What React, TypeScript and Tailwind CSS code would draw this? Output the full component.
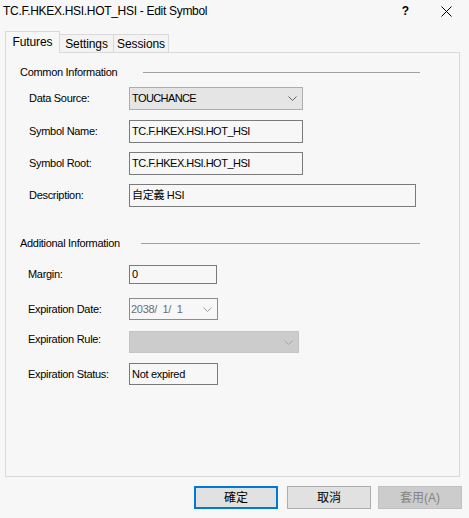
import React from "react";

function Chevron({ color = "#606060" }: { color?: string }) {
  return (
    <svg width="9" height="5" viewBox="0 0 9 5" className="block">
      <polyline points="0.5,0.5 4.5,4.5 8.5,0.5" fill="none" stroke={color} strokeWidth="1" />
    </svg>
  );
}

function Label({ children, w, className = "" }: { children: React.ReactNode; w: string; className?: string }) {
  return <span className={`${w} shrink-0 ${className}`}>{children}</span>;
}

export default function App() {
  return (
    <div className="w-[469px] h-[518px] bg-[#f7f7f7] flex flex-col font-['Liberation_Sans','Noto_Sans_CJK_TC',sans-serif] text-black overflow-hidden">
      {/* Title bar */}
      <div className="h-[21px] flex items-center pl-[3px] pr-[17px] pt-[1px]">
        <span className="text-[12px] tracking-[-0.3px]">TC.F.HKEX.HSI.HOT_HSI - Edit Symbol</span>
        <div className="ml-auto flex items-center">
          <span className="text-[12px] font-bold leading-none">?</span>
          <svg width="11" height="11" viewBox="0 0 11 11" className="ml-[32px] block">
            <line x1="0.5" y1="0.5" x2="10.5" y2="10.5" stroke="#000" strokeWidth="1" />
            <line x1="10.5" y1="0.5" x2="0.5" y2="10.5" stroke="#000" strokeWidth="1" />
          </svg>
        </div>
      </div>

      {/* Tabs */}
      <div className="mt-[10px] flex items-end pl-[5px] text-[12px] tracking-[-0.1px]">
        <div className="relative z-10 h-[22px] -mb-px w-[55px] border border-b-0 border-[#d9d9d9] bg-[#f7f7f7] flex items-center justify-center pb-[2px]">
          Futures
        </div>
        <div className="h-[18px] w-[54px] border-t border-r border-[#d9d9d9] bg-[#f3f3f3] flex items-center justify-center">
          Settings
        </div>
        <div className="h-[18px] w-[55px] border-t border-r border-[#d9d9d9] bg-[#f3f3f3] flex items-center justify-center">
          Sessions
        </div>
      </div>

      {/* Panel */}
      <div className="ml-[5px] w-[455px] h-[425px] border border-[#d9d9d9] bg-[#f7f7f7] flex flex-col text-[11px] tracking-[-0.3px]">
        <div className="mt-[11px] h-[16px] flex items-center pl-[14px]">
          <span className="w-[123px] shrink-0">Common Information</span>
          <div className="w-[277px] h-px bg-[#a0a0a0]" />
        </div>

        <div className="mt-[7px] h-[23px] flex items-center pl-[23px]">
          <Label w="w-[100px]">Data Source:</Label>
          <div className="w-[174px] h-[23px] border border-[#adadad] bg-[#e5e5e5] flex items-center pl-[2px] pr-[5px] tracking-[-0.6px]">
            <span>TOUCHANCE</span>
            <span className="ml-auto"><Chevron /></span>
          </div>
        </div>

        <div className="mt-[10px] h-[23px] flex items-center pl-[23px]">
          <Label w="w-[100px]">Symbol Name:</Label>
          <div className="w-[174px] h-[23px] border border-[#7a7a7a] flex items-center pl-[2px] tracking-[-0.5px]">
            TC.F.HKEX.HSI.HOT_HSI
          </div>
        </div>

        <div className="mt-[9px] h-[23px] flex items-center pl-[23px]">
          <Label w="w-[100px]">Symbol Root:</Label>
          <div className="w-[174px] h-[23px] border border-[#7a7a7a] flex items-center pl-[2px] tracking-[-0.5px]">
            TC.F.HKEX.HSI.HOT_HSI
          </div>
        </div>

        <div className="mt-[9px] h-[23px] flex items-center pl-[23px]">
          <Label w="w-[100px]">Description:</Label>
          <div className="w-[287px] h-[23px] border border-[#7a7a7a] flex items-center pl-[2px] tracking-[-0.3px]">
            自定義 HSI
          </div>
        </div>

        <div className="mt-[28px] h-[16px] flex items-center pl-[14px]">
          <span className="w-[121px] shrink-0">Additional Information</span>
          <div className="w-[279px] h-px bg-[#a0a0a0]" />
        </div>

        <div className="mt-[14px] h-[19px] flex items-center pl-[22px]">
          <Label w="w-[101px]">Margin:</Label>
          <div className="w-[88px] h-[19px] border border-[#7a7a7a] flex items-center pl-[2px]">0</div>
        </div>

        <div className="mt-[14px] h-[22px] flex items-center pl-[22px]">
          <Label w="w-[101px]">Expiration Date:</Label>
          <div className="w-[89px] h-[22px] border border-[#8c8c8c] flex items-center pl-[1px] pr-[5px] text-[#6d6d6d]">
            <span className="whitespace-pre">2038/  1/  1</span>
            <span className="ml-auto"><Chevron color="#a0a0a0" /></span>
          </div>
        </div>

        <div className="mt-[11px] h-[22px] flex items-center pl-[22px]">
          <Label w="w-[101px]" className="pb-[6px]">Expiration Rule:</Label>
          <div className="w-[170px] h-[22px] border border-[#c4c4c4] bg-[#cccccc] flex items-center justify-end pr-[5px]">
            <Chevron color="#a6a6a6" />
          </div>
        </div>

        <div className="mt-[10px] h-[22px] flex items-center pl-[22px]">
          <Label w="w-[101px]">Expiration Status:</Label>
          <div className="w-[89px] h-[22px] border border-[#7a7a7a] flex items-center pl-[2px]">
            Not expired
          </div>
        </div>
      </div>

      {/* Buttons */}
      <div className="mt-[9px] flex justify-end pr-[7px] text-[12px]">
        <button className="w-[84px] h-[23px] border-2 border-[#0078d7] bg-[#e1e1e1] flex items-center justify-center">
          確定
        </button>
        <button className="ml-[9px] w-[84px] h-[23px] border border-[#adadad] bg-[#e1e1e1] flex items-center justify-center">
          取消
        </button>
        <button className="ml-[7px] w-[84px] h-[23px] border border-[#bfbfbf] bg-[#cccccc] text-[#838383] flex items-center justify-center">
          套用(A)
        </button>
      </div>
    </div>
  );
}
